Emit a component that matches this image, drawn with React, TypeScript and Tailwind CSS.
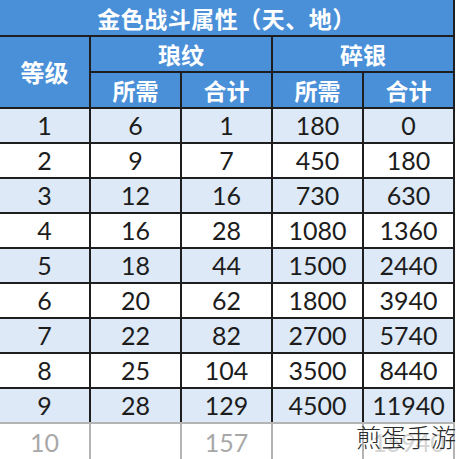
import React from 'react';

const rows: [string, string, string, string, string][] = [
    ['1', '6', '1', '180', '0'],
    ['2', '9', '7', '450', '180'],
    ['3', '12', '16', '730', '630'],
    ['4', '16', '28', '1080', '1360'],
    ['5', '18', '44', '1500', '2440'],
    ['6', '20', '62', '1800', '3940'],
    ['7', '22', '82', '2700', '5740'],
    ['8', '25', '104', '3500', '8440'],
    ['9', '28', '129', '4500', '11940'],
];

const head = 'bg-[#4a90d9] text-white font-bold text-[23px] flex items-center justify-center';
const cjk = { fontFamily: '"Noto Sans CJK SC", "Noto Sans", sans-serif' };
const num = { fontFamily: 'Lato, "Noto Sans CJK SC", sans-serif' };

const App: React.FC = () => {
    return (
        <div className="w-[456px] h-[459px] bg-white overflow-hidden relative">
            <div
                className="grid grid-cols-[89px_89px_89px_89px_89px] grid-rows-[35px_34px_34px] gap-[2px] bg-[#1e1e1e] w-[455px] pr-[2px] pb-[2px]"
                style={cjk}
            >
                <div className={`${head} col-span-5 tracking-[0.5px] pt-[2px]`}>金色战斗属性（天、地）</div>
                <div className={`${head} row-span-2 text-[24px]`}>等级</div>
                <div className={`${head} col-span-2`}>琅纹</div>
                <div className={`${head} col-span-2`}>碎银</div>
                <div className={head}>所需</div>
                <div className={head}>合计</div>
                <div className={head}>所需</div>
                <div className={head}>合计</div>
            </div>
            <div
                className="grid grid-cols-[89px_89px_89px_89px_89px] auto-rows-[33px] gap-[2px] bg-[#1e1e1e] w-[455px] pr-[2px]"
                style={num}
            >
                {rows.map((r, i) =>
                    r.map((v, j) => (
                        <div
                            key={`${i}-${j}`}
                            className={`flex items-center justify-center text-[25px] text-[#1c1c1c] ${i % 2 === 0 ? 'bg-[#dde9f6]' : 'bg-white'}`}
                        >
                            {v}
                        </div>
                    ))
                )}
            </div>
            <div className="relative">
                <div
                    className="grid grid-cols-[89px_89px_89px_89px_89px] h-[37px] gap-[2px] bg-[#b4b4b4] w-[455px] py-[2px] pr-[2px]"
                    style={num}
                >
                    <div className="bg-white flex items-center justify-center text-[25px] text-[#a8a8a8]">10</div>
                    <div className="bg-white" />
                    <div className="bg-white flex items-center justify-center text-[25px] text-[#a8a8a8]">157</div>
                    <div className="bg-white" />
                    <div className="bg-white flex items-center justify-center text-[25px] text-[#d4d4d4]">15940</div>
                </div>
                {/* watermark over the faded last row */}
                <div
                    className="absolute left-[356px] top-[2px] text-[25px] leading-none text-[#2a2a2a] whitespace-nowrap font-light"
                    style={cjk}
                >
                    煎蛋手游
                </div>
            </div>
        </div>
    );
};

export default App;
